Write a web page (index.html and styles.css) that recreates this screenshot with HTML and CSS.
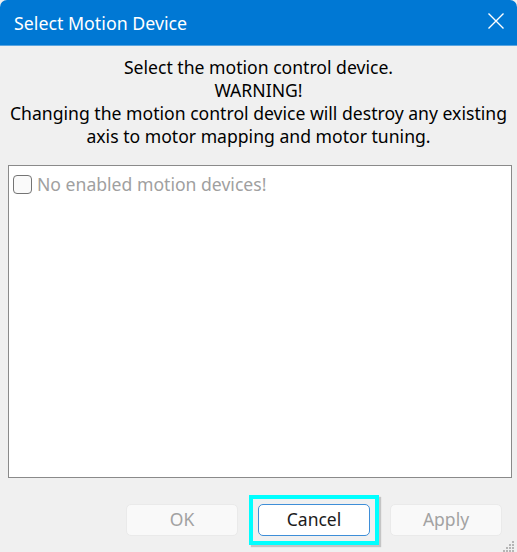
FILE: index.html
```html
<!DOCTYPE html>
<html>
<head>
<meta charset="utf-8">
<link rel="stylesheet" href="styles.css">
</head>
<body>
<div class="window">
  <div class="titlebar">
    <span class="title">Select Motion Device</span>
    <span class="close">
      <svg width="18" height="18" viewBox="0 0 18 18"><path d="M1.5 1.5 L16.5 16.5 M16.5 1.5 L1.5 16.5" stroke="#ffffff" stroke-width="1.4" fill="none"/></svg>
    </span>
  </div>
  <div class="content">
    <div class="message">
      <div>Select the motion control device.</div>
      <div>WARNING!</div>
      <div>Changing the motion control device will destroy any existing</div>
      <div>axis to motor mapping and motor tuning.</div>
    </div>
    <div class="listbox">
      <label class="item"><span class="check"></span><span class="item-text">No enabled motion devices!</span></label>
    </div>
    <div class="buttons">
      <button class="btn disabled">OK</button>
      <span class="focus-ring"><button class="btn default">Cancel</button></span>
      <button class="btn disabled">Apply</button>
    </div>
  </div>
  <svg class="grip" width="12" height="12" viewBox="0 0 12 12" fill="#b5b5b5">
    <rect x="9" y="1" width="2" height="2"/>
    <rect x="6" y="4" width="2" height="2"/><rect x="9" y="4" width="2" height="2"/>
    <rect x="3" y="7" width="2" height="2"/><rect x="6" y="7" width="2" height="2"/><rect x="9" y="7" width="2" height="2"/>
    <rect x="0" y="10" width="2" height="2"/><rect x="3" y="10" width="2" height="2"/><rect x="6" y="10" width="2" height="2"/><rect x="9" y="10" width="2" height="2"/>
  </svg>
</div>
</body>
</html>
```

FILE: styles.css
```css
html, body {
  margin: 0;
  padding: 0;
  background: #f0f0f0;
}
.window {
  position: relative;
  width: 517px;
  height: 552px;
  background: #f0f0f0;
  font-family: "Noto Sans", "Open Sans", sans-serif;
  display: flex;
  flex-direction: column;
  overflow: hidden;
}
.titlebar {
  background: #0078d4;
  border-bottom: 1px solid #5aa5e0;
  border-radius: 7px 7px 0 0;
  display: flex;
  align-items: center;
  justify-content: space-between;
  padding: 0 12px 0 14px;
  box-sizing: border-box;
  height: 46px;
}
.title {
  color: #ffffff;
  font-size: 17.8px;
  line-height: 22px;
  margin-top: 1px;
}
.close {
  display: flex;
  width: 18px;
  height: 18px;
  margin-top: -3px;
}
.content {
  display: flex;
  flex-direction: column;
  flex: 1;
}
.message {
  text-align: center;
  color: #000000;
  font-size: 17.6px;
  line-height: 23px;
  padding-top: 10px;
}
.listbox {
  margin: 17px 5px 0 8px;
  height: 313px;
  box-sizing: border-box;
  background: #ffffff;
  border: 1px solid #8a8a8a;
  padding: 8px 4px;
}
.item {
  display: flex;
  align-items: center;
  gap: 5px;
}
.check {
  width: 19px;
  height: 19px;
  box-sizing: border-box;
  border: 1.5px solid #747474;
  border-radius: 4px;
  background: #fafafa;
}
.item-text {
  color: #a0a0a0;
  font-size: 17.6px;
  line-height: 20px;
}
.buttons {
  display: flex;
  align-items: center;
  gap: 20px;
  padding: 26px 15px 0 0;
  justify-content: flex-end;
}
.btn {
  width: 112px;
  height: 32px;
  box-sizing: border-box;
  font-family: "Noto Sans", "Open Sans", sans-serif;
  font-size: 17.5px;
  line-height: 20px;
  border-radius: 5px;
  padding: 0 0 2px;
}
.disabled {
  background: #f9f9f9;
  border: 1px solid #eaeaea;
  color: #a2a2a2;
}
.focus-ring {
  display: flex;
  margin: -9px;
  padding: 5px;
  border: 4px solid #00ffff;
  box-shadow: 2px 2px 1px 0 #c4c4c4;
}
.default {
  background: #ffffff;
  border: 1.5px solid #3e8ed8;
  color: #1b1b1b;
}
.grip {
  position: absolute;
  right: 2px;
  bottom: 0;
}
```
